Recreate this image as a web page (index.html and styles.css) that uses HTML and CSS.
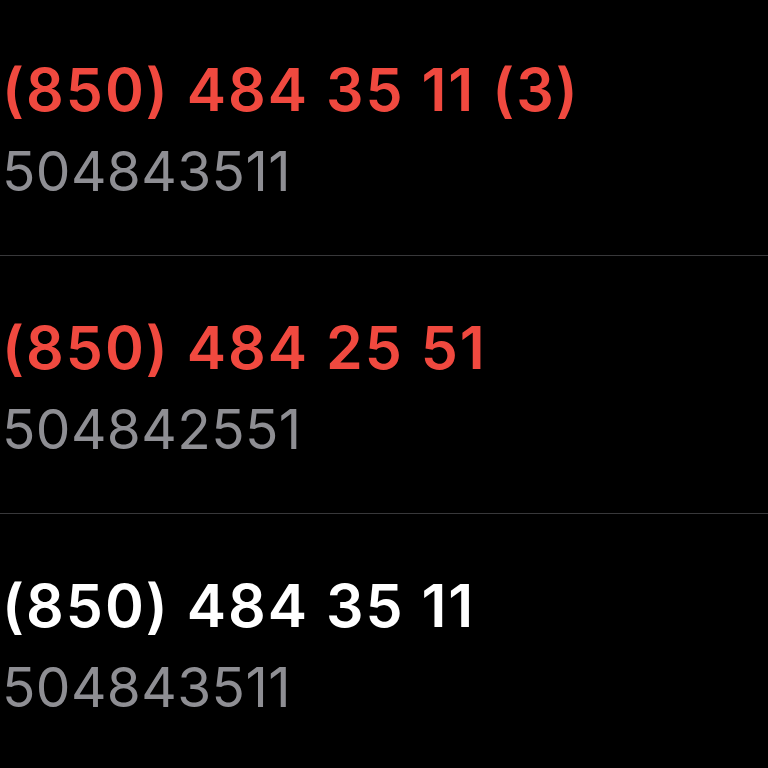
FILE: index.html
```html
<!DOCTYPE html>
<html>
<head>
<meta charset="utf-8">
<link rel="stylesheet" href="styles.css">
</head>
<body>
<div class="list">
  <div class="row">
    <div class="title missed">(850) 484 35 11 (3)</div>
    <div class="sub">504843511</div>
  </div>
  <div class="row">
    <div class="title missed">(850) 484 25 51</div>
    <div class="sub">504842551</div>
  </div>
  <div class="row">
    <div class="title">(850) 484 35 11</div>
    <div class="sub">504843511</div>
  </div>
</div>
</body>
</html>
```
FILE: styles.css
```css
html, body {
  margin: 0;
  padding: 0;
  background: #000;
  overflow: hidden;
}
body {
  font-family: Inter, "Liberation Sans", sans-serif;
  width: 768px;
  height: 768px;
}
.list {
  margin-top: -2px;
  display: flex;
  flex-direction: column;
}
.row {
  height: 257px;
  border-bottom: 1px solid #38383a;
  padding-left: 2px;
  box-sizing: content-box;
  display: flex;
  flex-direction: column;
}
.title {
  font-size: 59px;
  font-weight: 600;
  color: #fff;
  line-height: 72px;
  margin-top: 56px;
  letter-spacing: 2px;
  white-space: nowrap;
}
.title.missed {
  color: #f0493f;
}
.sub {
  font-size: 55px;
  font-weight: 400;
  color: #8e8e93;
  line-height: 66px;
  margin-top: 12px;
  letter-spacing: 0.4px;
  white-space: nowrap;
}
```
